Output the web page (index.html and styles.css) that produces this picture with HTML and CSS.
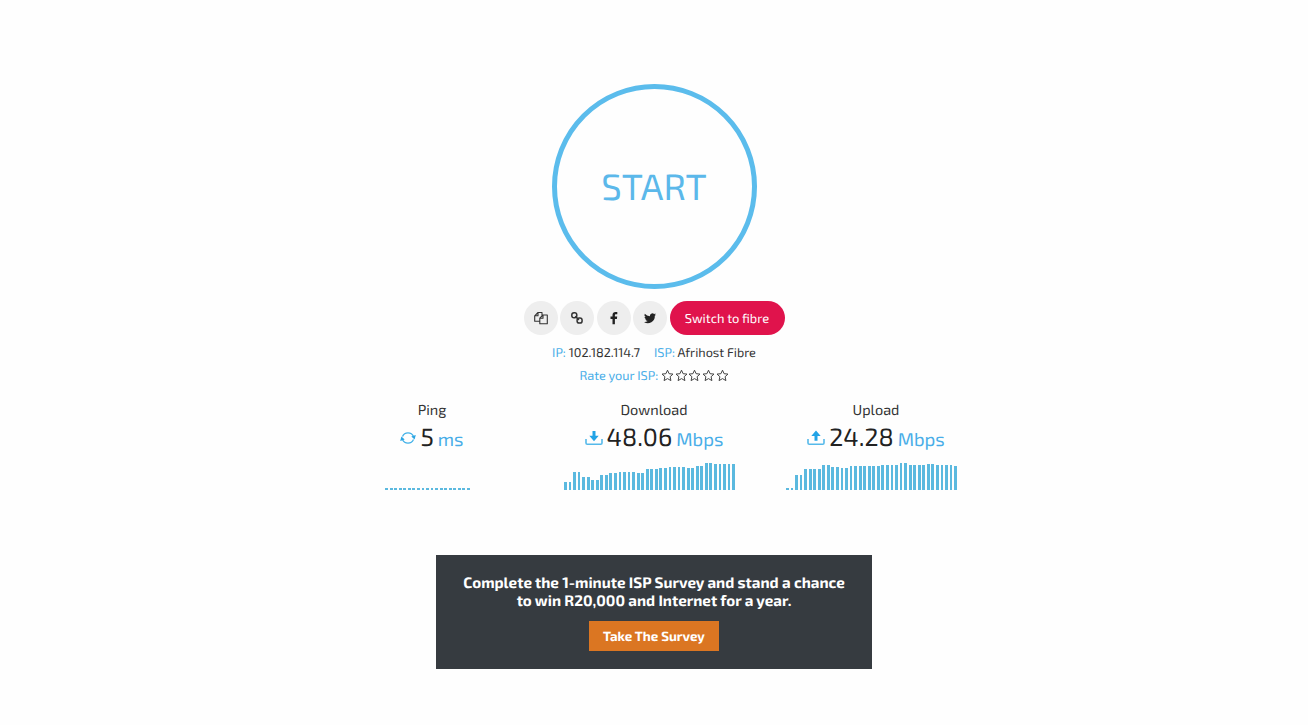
FILE: index.html
```html
<!DOCTYPE html>
<html lang="en">
<head>
    <meta charset="UTF-8">
    <meta name="viewport" content="width=device-width, initial-scale=1.0">
    <title>Speed Test</title>
    <link rel="stylesheet" href="styles.css">
</head>
<body>

    <main class="speedtest">
        <button class="start-btn" type="button">START</button>

        <!-- Share buttons -->
        <div class="actions">
            <a class="round-btn" href="#" aria-label="Copy">
                <svg width="16" height="16" viewBox="0 0 16 16" fill="none" stroke="#333" stroke-width="1.1" stroke-linejoin="round">
                    <path d="M6.500 11.300H1.700V5.800L5 2.500h4v3M5 2.500v3.300H1.700M10 5h4.300v8.800H6.800V8.200zM10 5v3.200H6.800"/>
                </svg>
            </a>
            <a class="round-btn" href="#" aria-label="Link">
                <svg width="16" height="16" viewBox="0 0 16 16" fill="none" stroke="#333" stroke-width="1.5">
                    <rect x="2.800" y="2.800" width="5" height="5" rx="2.200"/>
                    <rect x="8.100" y="8.100" width="5" height="5" rx="2.200"/>
                    <path d="M6.300 6.300l3.600 3.600"/>
                </svg>
            </a>
            <a class="round-btn" href="#" aria-label="Facebook">
                <svg width="16" height="16" viewBox="0 0 16 16" fill="#222">
                    <path d="M11.300 2v2.200H10c-.9 0-1.100.4-1.100 1.100v1.300h2.300l-.3 2.300h-2V14.300H6.500V8.900h-2V6.600h2V4.900C6.500 2.900 7.700 1.900 9.500 1.900z"/>
                </svg>
            </a>
            <a class="round-btn" href="#" aria-label="Twitter">
                <svg width="16" height="16" viewBox="0 0 16 16" fill="#222">
                    <path d="M14 4.400c-.4.200-.9.400-1.400.4.500-.3.900-.8 1.100-1.300-.5.300-1 .5-1.600.6a2.500 2.500 0 0 0-4.200 2.200A7 7 0 0 1 2.800 3.700a2.500 2.500 0 0 0 .8 3.300c-.4 0-.8-.1-1.100-.3 0 1.200.8 2.200 2 2.500-.4.100-.8.100-1.100 0 .3 1 1.200 1.700 2.300 1.700A5 5 0 0 1 2 12a7 7 0 0 0 10.800-6.300c.5-.3.900-.8 1.200-1.300z"/>
                </svg>
            </a>
            <a class="fibre-btn" href="#">Switch to fibre</a>
        </div>

        <div class="isp-info">
            <span><b>IP:</b> 102.182.114.7</span>
            <span><b>ISP:</b> Afrihost Fibre</span>
        </div>
        <div class="rating">
            <span>Rate your ISP:</span>
            <div class="stars"></div>
        </div>

        <!-- Results -->
        <div class="results">
            <section class="result">
                <h3>Ping</h3>
                <div class="value">
                    <svg width="16" height="16" viewBox="0 0 16 16" fill="none" stroke="#41b1e8" stroke-width="1.300">
                        <path d="M2.500 6.500A6 6 0 0 1 13.500 6.500M13.500 9.500A6 6 0 0 1 2.500 9.500"/>
                        <path d="M15.800 5l-1.200 4.500-3.300-3zM.2 11l1.200-4.500 3.300 3z" fill="#2ba5e3" stroke="none"/>
                    </svg>
                    <span class="num">5</span>
                    <span class="unit">ms</span>
                </div>
                <div class="chart" data-bars="2 2 2 2 2 2 2 2 2 2 2 2 2 2 2 2 2 2 2"></div>
            </section>
            <section class="result">
                <h3>Download</h3>
                <div class="value">
                    <svg width="18" height="16" viewBox="0 0 18 16">
                        <path d="M1 9v4q0 1.300 1.300 1.300h13.400q1.300 0 1.300-1.300V9" fill="none" stroke="#55b9ea" stroke-width="1.600"/>
                        <path d="M7.500 1h3v4.800h3.200L9 11.300 4.300 5.800h3.200z" fill="#21a3e6"/>
                    </svg>
                    <span class="num">48.06</span>
                    <span class="unit">Mbps</span>
                </div>
                <div class="chart" data-bars="8 8 18 18 13 13 10 10 15.5 15.5 17 17 18 18 18 18 17 17 21 21 21 22.5 22.5 23.5 23.5 23.5 23.5 22.5 22.5 24.5 24.5 27.5 27.5 26.5 26.5 26.5 26.5 26.5"></div>
            </section>
            <section class="result">
                <h3>Upload</h3>
                <div class="value">
                    <svg width="18" height="16" viewBox="0 0 18 16">
                        <path d="M1 9v4q0 1.300 1.300 1.300h13.400q1.300 0 1.300-1.300V9" fill="none" stroke="#55b9ea" stroke-width="1.600"/>
                        <path d="M7.500 10.800h3V6h3.200L9 .5 4.300 6h3.200z" fill="#21a3e6"/>
                    </svg>
                    <span class="num">24.28</span>
                    <span class="unit">Mbps</span>
                </div>
                <div class="chart" data-bars="2.5 2.5 15 15 21 21 21 21 25 25 23.5 23.5 22.5 22.5 24.5 24.5 24 24 24.5 24.5 24.5 25.5 25.5 25.5 25.5 27 27 25.5 25.5 25.5 25.5 26.5 26.5 25.5 25.5 25.5 25.5 24"></div>
            </section>
        </div>

        <!-- Survey -->
        <div class="survey">
            <p>Complete the 1-minute ISP Survey and stand a chance<br>to win R20,000 and Internet for a year.</p>
            <a class="survey-btn" href="#">Take The Survey</a>
        </div>
    </main>

    <script src="script.js"></script>
</body>
</html>
```
FILE: styles.css
```css
/* General Styles */
* {
    box-sizing: border-box;
}

body {
    margin: 0;
    background: #fefefe;
    color: #333;
    font-family: "Exo 2", "Noto Sans", sans-serif;
    font-size: 13px;
    text-rendering: geometricPrecision;
}

a {
    text-decoration: none;
}

.speedtest {
    display: flex;
    flex-direction: column;
    align-items: center;
    padding-top: 84px;
}

.start-btn {
    width: 205px;
    height: 205px;
    padding: 2px 0 0;
    border: 5px solid #5bbcec;
    border-radius: 50%;
    background: transparent;
    color: #5bb8ea;
    font-family: inherit;
    font-size: 36.5px;
    line-height: 1;
    text-rendering: inherit;
}

/* Share buttons */
.actions {
    display: flex;
    gap: 2.5px;
    height: 34px;
    margin-top: 12px;
}

.round-btn {
    display: flex;
    align-items: center;
    justify-content: center;
    width: 34px;
    height: 34px;
    border-radius: 50%;
    background: #eeeeee;
}

.fibre-btn {
    width: 115px;
    height: 34px;
    border-radius: 17px;
    background: #e0134c;
    color: #fff;
    font-size: 12.9px;
    line-height: 34px;
    text-align: center;
}

/* ISP details */
.isp-info {
    display: flex;
    gap: 14px;
    margin-top: 8px;
    font-size: 12.7px;
    line-height: 18px;
}

.isp-info b {
    color: #48ade8;
    font-weight: 400;
}

.rating {
    display: flex;
    align-items: center;
    gap: 3px;
    height: 18px;
    margin-top: 5px;
    color: #48ade8;
    font-size: 12.7px;
}

.stars {
    display: flex;
    gap: 0.6px;
}

.stars svg {
    display: block;
}

/* Results */
.results {
    display: flex;
    margin-top: 16px;
}

.result {
    display: flex;
    flex-direction: column;
    align-items: center;
    width: 222px;
}

.result h3 {
    margin: 0;
    font-size: 14.5px;
    font-weight: 400;
    line-height: 19px;
}

.value {
    display: flex;
    align-items: baseline;
    height: 36px;
    line-height: 36px;
}

.value svg {
    align-self: center;
    margin: 1px 4px 0 0;
}

.num {
    color: #222;
    font-size: 25px;
}

.unit {
    margin-left: 4px;
    color: #48ade8;
    font-size: 18.6px;
}

.chart {
    display: flex;
    align-items: flex-end;
    gap: 1.75px;
    height: 35px;
    margin-right: 9px;
}

.bar {
    width: 2.8px;
    background: #5bb9df;
}

/* Survey */
.survey {
    width: 436px;
    height: 114px;
    margin-top: 65px;
    padding-top: 19px;
    background: #363b40;
    color: #fff;
    text-align: center;
    font-weight: 700;
}

.survey p {
    margin: 0 0 11px;
    font-size: 15.2px;
    line-height: 18px;
}

.survey-btn {
    display: block;
    width: 130px;
    height: 30px;
    margin: 0 auto;
    background: #db7622;
    color: #fff;
    font-size: 13.3px;
    line-height: 31px;
}
```
FILE: script.js
```js
const star = '<svg width="13" height="13" viewBox="0 0 13 13" fill="none" stroke="#444" stroke-width="1"><path d="M6.500 1.200l1.600 3.500 3.900.4-2.900 2.600.8 3.900-3.400-2-3.400 2 .8-3.900L1 5.100l3.900-.4z"/></svg>';
document.querySelector(".stars").innerHTML = star.repeat(5);

document.querySelectorAll(".chart").forEach(function (chart) {
    chart.dataset.bars.split(" ").forEach(function (height) {
        const bar = document.createElement("div");
        bar.className = "bar";
        bar.style.height = height + "px";
        chart.appendChild(bar);
    });
});
```
